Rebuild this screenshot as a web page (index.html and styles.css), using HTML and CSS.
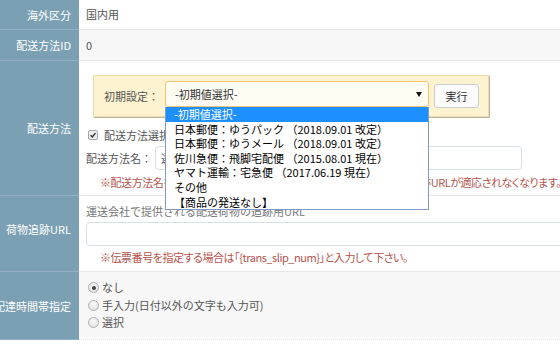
FILE: index.html
```html
<!DOCTYPE html>
<html lang="ja">
<head>
<meta charset="utf-8">
<link rel="stylesheet" href="styles.css">
</head>
<body>
<div class="form">
  <div class="row">
    <div class="label">海外区分</div>
    <div class="value plain">国内用</div>
  </div>
  <div class="row alt">
    <div class="label">配送方法ID</div>
    <div class="value plain">0</div>
  </div>
  <div class="row r3">
    <div class="label">配送方法</div>
    <div class="value method">
      <div class="preset">
        <span class="preset-label">初期設定：</span>
        <div class="select-wrap">
          <div class="select">-初期値選択-<span class="arrow"></span></div>
          <ul class="options">
            <li class="active">-初期値選択-</li>
            <li>日本郵便：ゆうパック （2018.09.01 改定）</li>
            <li>日本郵便：ゆうメール （2018.09.01 改定）</li>
            <li>佐川急便：飛脚宅配便 （2015.08.01 現在）</li>
            <li>ヤマト運輸：宅急便 （2017.06.19 現在）</li>
            <li>その他</li>
            <li>【商品の発送なし】</li>
          </ul>
        </div>
        <button class="btn">実行</button>
      </div>
      <div class="check"><span class="cb"><svg viewBox="0 0 10 10" width="10" height="10"><path d="M2 5.2 L4.2 7.4 L8 2.6" fill="none" stroke="#333" stroke-width="1.8"/></svg></span>配送方法選択時の初期値を使用する</div>
      <div class="name-row"><span class="name-label">配送方法名：</span><div class="input name-input">選択してください</div></div>
      <p class="note">※配送方法名を変更すると、既に登録されている受注データ等の荷物追跡URLが適応されなくなります。</p>
    </div>
  </div>
  <div class="row r4">
    <div class="label">荷物追跡URL</div>
    <div class="value track">
      <div class="hint">運送会社で提供される配送荷物の追跡用URL</div>
      <div class="input url-input"></div>
      <p class="note">※伝票番号を指定する場合は「{trans_slip_num}」と入力して下さい。</p>
    </div>
  </div>
  <div class="row alt r5">
    <div class="label">配達時間帯指定</div>
    <div class="value radios">
      <div class="radio"><span class="rb on"></span>なし</div>
      <div class="radio"><span class="rb"></span>手入力(日付以外の文字も入力可)</div>
      <div class="radio"><span class="rb"></span>選択</div>
    </div>
  </div>
</div>
</body>
</html>
```
FILE: styles.css
```css
html, body {
  margin: 0;
  padding: 0;
  background: #fff;
  overflow: hidden;
  width: 560px;
  height: 348px;
}
body {
  font-family: "Noto Sans CJK JP", sans-serif;
  font-size: 11px;
  color: #555;
}
.form {
  width: 560px;
}
.row {
  display: grid;
  grid-template-columns: 79px 1fr;
  border-bottom: 1px solid #e6e6e6;
}
.row.alt .value {
  background: #f7f7f7;
}
.label {
  background: #7b9fb3;
  color: #fff;
  display: flex;
  justify-content: flex-end;
  align-items: center;
  padding-right: 8px;
  white-space: nowrap;
  box-shadow: 0 1px 0 #92b0c1;
}
.value {
  min-width: 0;
}
.plain {
  height: 29px;
  line-height: 29px;
  padding-left: 7px;
}
.row.alt .plain {
  height: 30px;
  line-height: 30px;
}
/* row 3 */
.method {
  padding: 14px 0 6px 7px;
}
.preset {
  display: inline-flex;
  align-items: flex-start;
  margin-left: 7px;
  height: 40px;
  padding: 0 9px 0 10px;
  background: #fdf3d1;
  border: 1px solid #eadca8;
  box-shadow: 1px 1px 0 #b9b4a4;
}
.preset-label {
  line-height: 40px;
  width: 61px;
  color: #555;
}
.select-wrap {
  position: relative;
  margin-top: 5px;
}
.select {
  position: relative;
  box-sizing: border-box;
  width: 264px;
  height: 26px;
  line-height: 24px;
  border: 1px solid #f2c46a;
  border-radius: 3px;
  background: #fffdf3;
  padding-left: 9px;
  color: #333;
}
.arrow {
  position: absolute;
  right: 6px;
  top: 10px;
  width: 0;
  height: 0;
  border-left: 3px solid transparent;
  border-right: 3px solid transparent;
  border-top: 5px solid #111;
}
.options {
  position: absolute;
  left: 0;
  top: 26px;
  margin: 0;
  padding: 0;
  list-style: none;
  box-sizing: border-box;
  width: 264px;
  background: #fff;
  border: 1px solid #7f9cc0;
  border-top: none;
  z-index: 10;
}
.options li {
  line-height: 14.6px;
  height: 14.6px;
  padding-left: 8px;
  color: #000;
  white-space: nowrap;
}
.options li.active {
  background: #1e8fff;
  color: #fff;
}
.btn {
  margin: 8px 0 0 5px;
  width: 45px;
  height: 24px;
  padding: 0;
  border: 1px solid #cfcfcf;
  border-radius: 3px;
  background: #fbfbfb;
  font-family: inherit;
  font-size: 11px;
  color: #333;
}
.check {
  display: flex;
  align-items: center;
  margin-top: 10px;
  height: 16px;
  line-height: 16px;
  white-space: nowrap;
}
.cb {
  box-sizing: border-box;
  width: 10px;
  height: 10px;
  margin: 0 6px 0 2px;
  border: 1px solid #a8a8a8;
  border-radius: 2px;
  background: #ececec;
  display: inline-flex;
  align-items: center;
  justify-content: center;
}
.cb svg {
  width: 8px;
  height: 8px;
}
.name-row {
  display: flex;
  align-items: center;
  margin-top: 3px;
}
.name-label {
  width: 69px;
}
.input {
  box-sizing: border-box;
  height: 24px;
  border: 1px solid #d7dfe7;
  border-radius: 4px;
  background: #fff;
}
.name-input {
  width: 367px;
  line-height: 22px;
  padding-left: 5px;
  color: #555;
}
.note {
  margin: 5px 0 0 14px;
  line-height: 14px;
  color: #b5544c;
  white-space: nowrap;
  font-feature-settings: "palt";
  letter-spacing: -0.45px;
}
/* row 4 */
.r4 .label {
  padding-bottom: 9px;
}
.track {
  padding: 7px 0 7px 7px;
}
.hint {
  line-height: 16px;
  color: #777;
  white-space: nowrap;
}
.url-input {
  margin-top: 3px;
  width: 490px;
}
.track .note {
  margin-top: 4px;
}
/* row 5 */
.r5 {
  border-bottom: 1px dotted #e3e3e3;
}
.radios {
  padding: 7px 0 7.5px 9px;
}
.radio {
  display: flex;
  align-items: center;
  height: 17.5px;
  line-height: 17.5px;
  white-space: nowrap;
}
.rb {
  box-sizing: border-box;
  width: 11px;
  height: 11px;
  border-radius: 50%;
  border: 1px solid #b0b0b0;
  background: radial-gradient(circle at 50% 35%, #fafafa, #dcdcdc);
  margin-right: 3px;
  position: relative;
}
.rb.on::after {
  content: "";
  position: absolute;
  left: 2.5px;
  top: 2.5px;
  width: 4px;
  height: 4px;
  border-radius: 50%;
  background: #444;
}
```
